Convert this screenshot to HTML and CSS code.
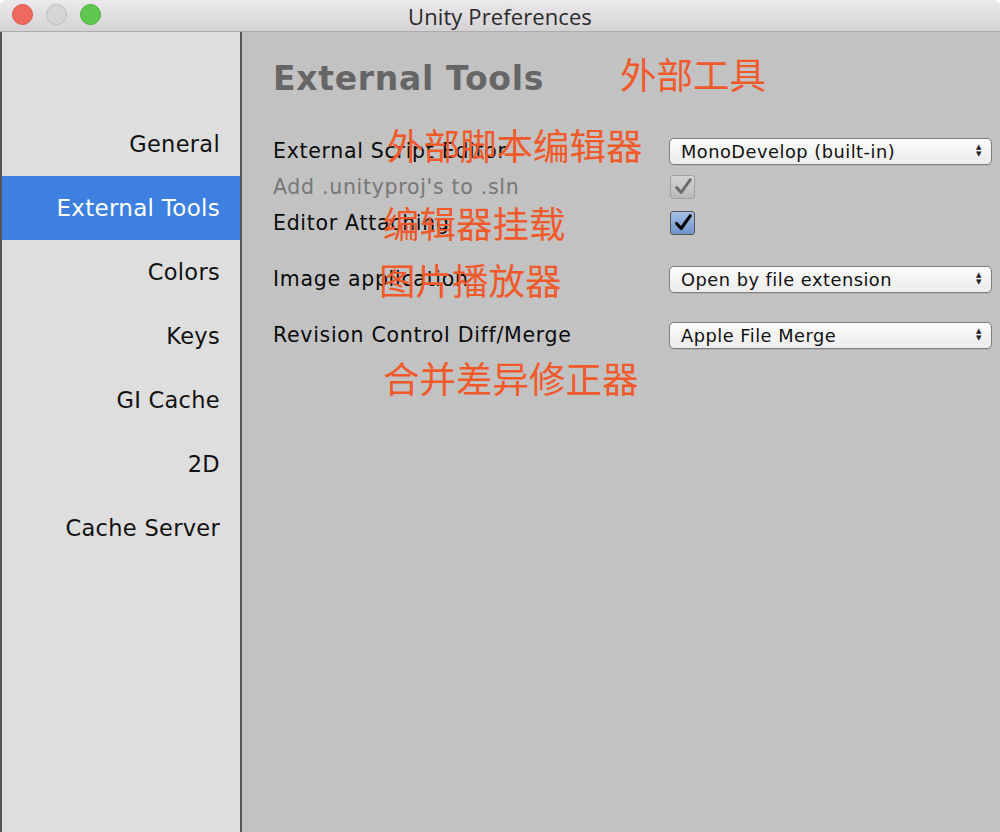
FILE: index.html
```html
<!DOCTYPE html>
<html>
<head>
<meta charset="utf-8">
<link rel="stylesheet" href="styles.css">
</head>
<body>
<div class="window">
  <div class="titlebar">
    <div class="lights">
      <span class="light red"></span>
      <span class="light gray"></span>
      <span class="light green"></span>
    </div>
    <div class="title">Unity Preferences</div>
  </div>
  <div class="main">
    <nav class="sidebar">
      <div class="nav-item">General</div>
      <div class="nav-item active">External Tools</div>
      <div class="nav-item">Colors</div>
      <div class="nav-item">Keys</div>
      <div class="nav-item">GI Cache</div>
      <div class="nav-item">2D</div>
      <div class="nav-item">Cache Server</div>
    </nav>
    <section class="content">
      <h1 class="heading">External Tools</h1>
      <div class="rows">
        <div class="row">
          <span class="label">External Script Editor</span>
          <div class="select"><span>MonoDevelop (built-in)</span><span class="arrows">▲<br>▼</span></div>
        </div>
        <div class="row">
          <span class="label disabled">Add .unityproj's to .sln</span>
          <span class="check disabled">
            <svg viewBox="0 0 24 24" width="24" height="24"><path d="M5 12.5 L10 18 L20 4" fill="none" stroke="#6a6a6a" stroke-width="3.2" stroke-linecap="round" stroke-linejoin="round"/></svg>
          </span>
        </div>
        <div class="row">
          <span class="label">Editor Attaching</span>
          <span class="check on">
            <svg viewBox="0 0 24 24" width="24" height="24"><path d="M5 12.5 L10 18 L20 4" fill="none" stroke="#000" stroke-width="3.4" stroke-linecap="round" stroke-linejoin="round"/></svg>
          </span>
        </div>
        <div class="row tall">
          <span class="label">Image application</span>
          <div class="select"><span>Open by file extension</span><span class="arrows">▲<br>▼</span></div>
        </div>
        <div class="row tall">
          <span class="label">Revision Control Diff/Merge</span>
          <div class="select"><span>Apple File Merge</span><span class="arrows">▲<br>▼</span></div>
        </div>
      </div>
      <span class="note n1">外部工具</span>
      <span class="note n2">外部脚本编辑器</span>
      <span class="note n3">编辑器挂载</span>
      <span class="note n4">图片播放器</span>
      <span class="note n5">合并差异修正器</span>
    </section>
  </div>
</div>
</body>
</html>
```
FILE: styles.css
```css
html, body {
  margin: 0;
  padding: 0;
  width: 1000px;
  height: 832px;
  overflow: hidden;
}
.window {
  width: 1000px;
  height: 832px;
  display: flex;
  flex-direction: column;
  font-family: "DejaVu Sans", "Noto Sans CJK SC", sans-serif;
}
.titlebar {
  height: 31px;
  flex: none;
  position: relative;
  background: linear-gradient(#ebe9eb, #d4d2d4);
  border-bottom: 1px solid #acacac;
  display: flex;
  align-items: center;
  justify-content: center;
  border-radius: 6px 6px 0 0;
}
.lights {
  position: absolute;
  left: 12px;
  top: 4px;
  display: flex;
  gap: 13px;
}
.light {
  width: 21px;
  height: 21px;
  border-radius: 50%;
  box-sizing: border-box;
}
.light.red { background: #ef6a5e; border: 1px solid #d9534a; }
.light.gray { background: #d6d5d6; border: 1px solid #bcbbbc; }
.light.green { background: #5fc94f; border: 1px solid #4aad3b; }
.title {
  font-family: "Open Sans", "Liberation Sans", sans-serif;
  font-size: 22px;
  color: #2a2a2a;
  letter-spacing: 0.1px;
}
.main {
  flex: 1;
  display: flex;
  background: #c2c2c2;
}
.sidebar {
  width: 238px;
  flex: none;
  background: #dedede;
  border-left: 2px solid #555;
  border-right: 2px solid #555;
  padding-top: 80px;
  box-sizing: content-box;
}
.nav-item {
  height: 64px;
  display: flex;
  align-items: center;
  justify-content: flex-end;
  padding-right: 20px;
  font-size: 22.5px;
  color: #111;
  letter-spacing: 0.3px;
}
.nav-item.active {
  background: #3d80df;
  color: #fff;
  font-size: 23px;
}
.content {
  flex: 1;
  position: relative;
  padding-left: 31px;
  padding-right: 8px;
}
.heading {
  margin: 0;
  margin-top: 27px;
  height: 40px;
  line-height: 40px;
  font-size: 33px;
  font-weight: bold;
  color: #666;
  letter-spacing: 0.7px;
}
.rows {
  margin-top: 34px;
  display: flex;
  flex-direction: column;
}
.row {
  height: 36px;
  display: flex;
  align-items: center;
  justify-content: space-between;
}
.row.tall {
  margin-top: 20px;
}
.label {
  font-size: 20.5px;
  color: #0a0a0a;
  letter-spacing: 0.7px;
}
.label.disabled {
  color: #777;
}
.select {
  width: 323px;
  height: 27px;
  box-sizing: border-box;
  border: 1px solid #7e7e7e;
  border-radius: 5px;
  background: linear-gradient(#fbfbfb, #ececec);
  box-shadow: 0 1px 0 rgba(0,0,0,0.08);
  display: flex;
  align-items: center;
  justify-content: space-between;
  padding: 0 9px 0 11px;
  font-size: 17.8px;
  color: #111;
  letter-spacing: 0.5px;
}
.arrows {
  font-size: 7px;
  line-height: 7px;
  color: #222;
  text-align: center;
}
.check {
  width: 25px;
  height: 24px;
  box-sizing: border-box;
  border-radius: 3px;
  margin-right: 297px;
  display: flex;
  align-items: center;
  justify-content: center;
}
.check svg { width: 22px; height: 22px; }
.check.disabled {
  background: linear-gradient(#d4d4d4, #b8b8b8);
  border: 1px solid #a0a0a0;
}
.check.on {
  background: linear-gradient(#a7bfe4, #6f95d0);
  border: 1px solid #555;
}
.note {
  position: absolute;
  color: #f05a2a;
  font-family: "Noto Sans CJK SC", sans-serif;
  font-size: 36.5px;
  line-height: 1;
  white-space: nowrap;
}
.n1 { left: 378px; top: 24px; }
.n2 { left: 145px; top: 95px; }
.n3 { left: 141px; top: 173px; }
.n4 { left: 137px; top: 230px; }
.n5 { left: 141px; top: 328px; }
```
